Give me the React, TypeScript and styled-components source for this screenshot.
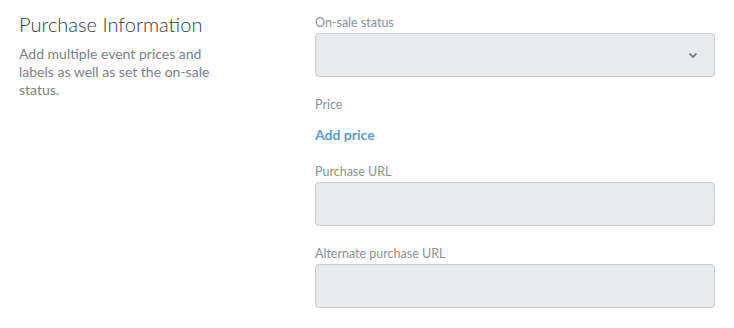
import styled, { createGlobalStyle } from "styled-components";

const GlobalStyle = createGlobalStyle`
  body {
    margin: 0;
    background: #ffffff;
    font-family: Lato, "Noto Sans", sans-serif;
  }
`;

const Section = styled.div`
  display: flex;
  justify-content: space-between;
  padding: 12px 19px 0 19px;
`;

const Intro = styled.div`
  width: 205px;
`;

const Title = styled.h2`
  margin: 0;
  font-size: 20px;
  line-height: 24px;
  font-weight: 300;
  color: #34393f;
`;

const Description = styled.p`
  margin: 9px 0 0;
  font-size: 14px;
  line-height: 18px;
  color: #7b8087;
`;

const Fields = styled.div`
  width: 400px;
  display: flex;
  flex-direction: column;
  gap: 20px;
  padding-top: 3px;
`;

const Field = styled.div`
  display: flex;
  flex-direction: column;
`;

const Label = styled.label<{ $gap?: number }>`
  font-size: 12.5px;
  line-height: 16px;
  color: #8b9096;
  margin-bottom: ${(p) => p.$gap ?? 2}px;
`;

const Box = styled.div`
  position: relative;
  height: 44px;
  box-sizing: border-box;
  border: 1px solid #c9cbce;
  border-radius: 4px;
  background: #e9eaec;
`;

const Chevron = styled.svg`
  position: absolute;
  right: 16px;
  top: 18px;
`;

const AddLink = styled.a`
  font-size: 14px;
  line-height: 18px;
  font-weight: 700;
  color: #5b9cc8;
  cursor: pointer;
`;

export default function App() {
  return (
    <>
      <GlobalStyle />
      <Section>
        <Intro>
          <Title>Purchase Information</Title>
          <Description>
            Add multiple event prices and labels as well as set the on-sale
            status.
          </Description>
        </Intro>
        <Fields>
          <Field>
            <Label>On-sale status</Label>
            <Box>
              <Chevron width="10" height="7" viewBox="0 0 10 7">
                <path
                  d="M1.5 1.5 L5 5 L8.5 1.5"
                  fill="none"
                  stroke="#7a7e83"
                  strokeWidth="1.8"
                />
              </Chevron>
            </Box>
          </Field>
          <Field>
            <Label $gap={13}>Price</Label>
            <AddLink>Add price</AddLink>
          </Field>
          <Field>
            <Label>Purchase URL</Label>
            <Box />
          </Field>
          <Field>
            <Label>Alternate purchase URL</Label>
            <Box />
          </Field>
        </Fields>
      </Section>
    </>
  );
}
